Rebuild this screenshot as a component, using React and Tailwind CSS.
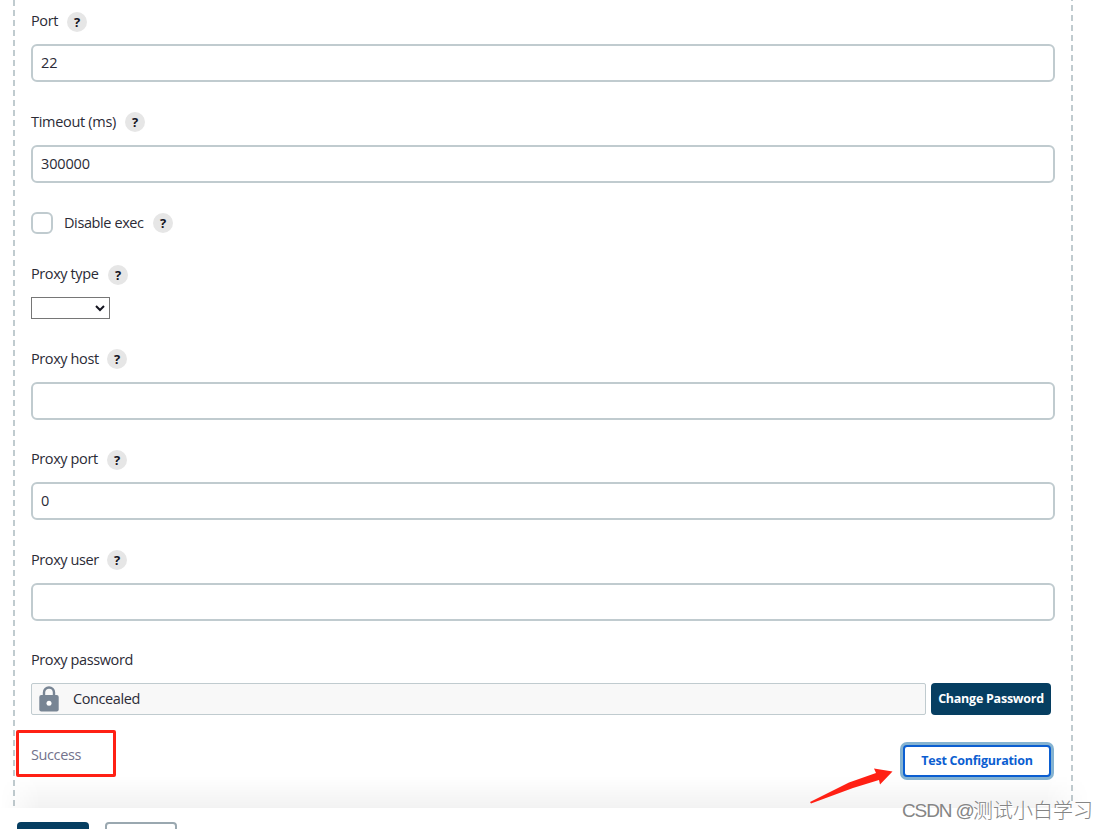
import React, { useState } from 'react';

const HelpButton = () => (
  <button
    type="button"
    className="flex h-5 w-5 shrink-0 items-center justify-center rounded-full bg-[#e6e6e6] pb-px text-[13px] leading-5 font-bold text-[#14141f]"
  >
    ?
  </button>
);

// Label with the round help button on its right
const Label = ({ text, width, className = '-mt-px' }) => (
  <div className="flex h-5">
    <span className={`${width} ${className} shrink-0 whitespace-nowrap leading-5`}>{text}</span>
    <HelpButton />
  </div>
);

const TextInput = ({ value, onChange, className }) => (
  <input
    type="text"
    value={value}
    onChange={(e) => onChange(e.target.value)}
    className={`${className} block h-[38px] w-full rounded-md border-2 border-[#c0cbcf] bg-white px-2 pb-0.5 tracking-[-0.15px] outline-none`}
  />
);

// Dashed vertical line at the side of the server block
const DashedLine = ({ className }) => (
  <div
    className={`${className} w-0.5 shrink-0 bg-[repeating-linear-gradient(to_bottom,#c0cbcf_0px,#c0cbcf_6px,transparent_6px,transparent_10px)]`}
  />
);

const App = () => {
  const [port, setPort] = useState('22');
  const [timeout, setTimeoutMs] = useState('300000');
  const [disableExec, setDisableExec] = useState(false);
  const [proxyHost, setProxyHost] = useState('');
  const [proxyPort, setProxyPort] = useState('0');
  const [proxyUser, setProxyUser] = useState('');

  return (
    <div className="relative flex h-[829px] w-[1106px] flex-col overflow-hidden bg-white font-['Open_Sans','Noto_Sans_CJK_SC',sans-serif] text-[14.5px] tracking-[-0.4px] text-[#2b2b36]">
      {/* Server settings */}
      <div className="flex h-[808px] shrink-0 pl-[13px]">
        <DashedLine className="h-[806px]" />

        <div className="w-[1056px] shrink-0 pr-4 pl-4 pt-3">
          <div className="w-[1024px]">
            <Label text="Port" width="w-9" />
            <TextInput className="mt-3" value={port} onChange={setPort} />

            <div className="mt-[30px]">
              <Label text="Timeout (ms)" width="w-[94px]" className="mt-0 tracking-[-0.3px]" />
            </div>
            <TextInput className="mt-[13px]" value={timeout} onChange={setTimeoutMs} />

            <label className="mt-[29px] flex h-[22px] items-center">
              <input
                type="checkbox"
                checked={disableExec}
                onChange={(e) => setDisableExec(e.target.checked)}
                className="h-[22px] w-[22px] appearance-none rounded-md border-2 border-[#c0cbcf] checked:bg-[#0b6aa2]"
              />
              <span className="ml-[11px] w-[89px] whitespace-nowrap leading-5">Disable exec</span>
              <HelpButton />
            </label>

            <div className="mt-[31px]">
              <Label text="Proxy type" width="w-[77px]" />
            </div>
            <div className="mt-3 flex h-[22px] w-[79px] items-center justify-end border border-[#767676] bg-white pr-1">
              <svg width="10" height="8" viewBox="0 0 10 8" fill="none">
                <path d="M1 2l4 4 4-4" stroke="#14141f" strokeWidth="2" />
              </svg>
            </div>

            <div className="mt-[30px]">
              <Label text="Proxy host" width="w-[76px]" className="mt-0" />
            </div>
            <TextInput className="mt-[13px]" value={proxyHost} onChange={setProxyHost} />

            <div className="mt-[30px]">
              <Label text="Proxy port" width="w-[76px]" />
            </div>
            <TextInput className="mt-3" value={proxyPort} onChange={setProxyPort} />

            <div className="mt-[30px]">
              <Label text="Proxy user" width="w-[76px]" className="mt-0" />
            </div>
            <TextInput className="mt-[13px]" value={proxyUser} onChange={setProxyUser} />

            <div className="mt-[29px] h-5 leading-5">Proxy password</div>
            <div className="mt-[13px] flex h-8">
              <div className="flex w-[895px] items-center rounded-xs border border-[#c0cbcf] bg-[#f8f8f8] pl-[7px]">
                <svg width="20" height="26" viewBox="0 0 20 26" className="shrink-0">
                  <path
                    d="M5 10V6.5a5 5 0 0 1 10 0V10"
                    fill="none"
                    stroke="#788594"
                    strokeWidth="2.4"
                  />
                  <rect x="0.3" y="9" width="19.4" height="16.5" rx="2" fill="#788594" />
                  <circle cx="10" cy="17.2" r="2.5" fill="#fff" />
                </svg>
                <span className="ml-[14px]">Concealed</span>
              </div>
              <button
                type="button"
                className="ml-[5px] w-[120px] rounded bg-[#063e61] text-[12.5px] font-bold tracking-[-0.25px] whitespace-nowrap text-white"
              >
                Change Password
              </button>
            </div>

            <div className="mt-[30px] flex justify-between pr-1">
              <div className="h-5 leading-5 text-[#73738c]">Success</div>
              <button
                type="button"
                className="h-8 w-[148px] rounded border-2 border-[#0b5ed1] bg-white text-[12.5px] font-bold tracking-[-0.25px] whitespace-nowrap text-[#0b5ed1] ring-3 ring-[#85b3d1]"
              >
                Test Configuration
              </button>
            </div>
          </div>
        </div>

        {/* starts with the last pixel of a dash */}
        <div className="flex flex-col">
          <div className="mb-1 h-px w-0.5 bg-[#c0cbcf]" />
          <DashedLine className="h-[796px]" />
        </div>
      </div>

      {/* Bottom bar */}
      <div className="flex h-[21px] shrink-0 gap-4 overflow-hidden bg-white pt-3.5 pl-[17px]">
        <div className="h-8 w-[72px] shrink-0 rounded bg-[#063e61]" />
        <div className="h-8 w-[72px] shrink-0 rounded border-2 border-[#9aa8b0]" />
      </div>
      <div className="pointer-events-none absolute top-[776px] left-0 h-8 w-full bg-linear-to-b from-transparent to-black/5 [mask-image:linear-gradient(to_right,transparent,black_40px,black_1045px,transparent_1090px)]" />

      {/* Annotations */}
      <div className="absolute top-[730px] left-4 h-[47px] w-[100px] rounded-xs border-3 border-[#ff2014]" />
      <svg className="absolute top-[764px] left-[806px]" width="90" height="42" viewBox="0 0 90 42">
        <path d="M4 38L43 18.5L70 9L68 4.5L86.5 7.5L74 20.5L73 16L47 24L5 39.5Z" fill="#ff2014" />
      </svg>
      <div className="absolute top-[799px] left-[902px] flex items-center font-['Liberation_Sans','Noto_Sans_CJK_SC',sans-serif] text-[20px] leading-6 font-light whitespace-nowrap text-[#858585] [text-shadow:1px_1px_0_#fff]">
        <span className="w-[71px] text-[19px] tracking-[-1.1px]">CSDN @</span>
        <span className="tracking-normal">测试小白学习</span>
      </div>
    </div>
  );
};

export default App;
